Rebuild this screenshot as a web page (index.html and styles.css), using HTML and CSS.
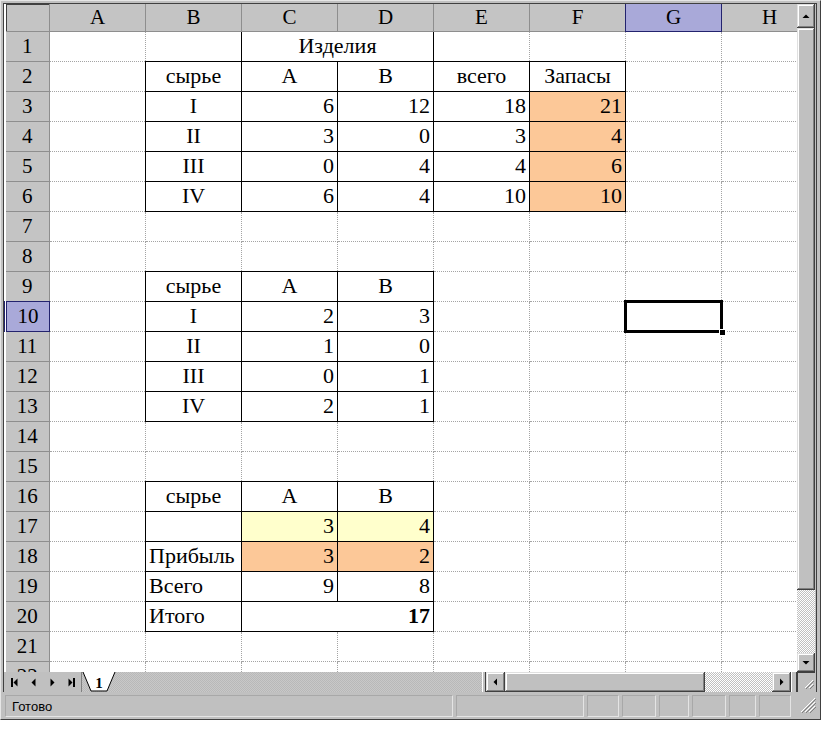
FILE: index.html
```html
<!DOCTYPE html>
<html>
<head>
<meta charset="utf-8">
<link rel="stylesheet" href="styles.css">
</head>
<body>
<div class="window">
  <div class="inner">
    <div class="main">
      <div class="grid-wrap">
        <table class="sheet">
          <colgroup>
            <col class="c-rh"><col class="c-col"><col class="c-col"><col class="c-col"><col class="c-col"><col class="c-col"><col class="c-col"><col class="c-col"><col class="c-col">
          </colgroup>
          <tr class="hdr"><th class="corner"></th><th>A</th><th>B</th><th>C</th><th>D</th><th>E</th><th>F</th><th class="hsel">G</th><th>H</th></tr>
          <tr><th class="rh">1</th><td></td><td></td><td colspan="2" class="b c">Изделия</td><td></td><td></td><td></td><td></td></tr>
          <tr><th class="rh">2</th><td></td><td class="b c">сырье</td><td class="b c">A</td><td class="b c">B</td><td class="b c">всего</td><td class="b c">Запасы</td><td></td><td></td></tr>
          <tr><th class="rh">3</th><td></td><td class="b c">I</td><td class="b r">6</td><td class="b r">12</td><td class="b r">18</td><td class="b r or">21</td><td></td><td></td></tr>
          <tr><th class="rh">4</th><td></td><td class="b c">II</td><td class="b r">3</td><td class="b r">0</td><td class="b r">3</td><td class="b r or">4</td><td></td><td></td></tr>
          <tr><th class="rh">5</th><td></td><td class="b c">III</td><td class="b r">0</td><td class="b r">4</td><td class="b r">4</td><td class="b r or">6</td><td></td><td></td></tr>
          <tr><th class="rh">6</th><td></td><td class="b c">IV</td><td class="b r">6</td><td class="b r">4</td><td class="b r">10</td><td class="b r or">10</td><td></td><td></td></tr>
          <tr><th class="rh">7</th><td></td><td></td><td></td><td></td><td></td><td></td><td></td><td></td></tr>
          <tr><th class="rh">8</th><td></td><td></td><td></td><td></td><td></td><td></td><td></td><td></td></tr>
          <tr><th class="rh">9</th><td></td><td class="b c">сырье</td><td class="b c">A</td><td class="b c">B</td><td></td><td></td><td></td><td></td></tr>
          <tr><th class="rh hsel">10</th><td></td><td class="b c">I</td><td class="b r">2</td><td class="b r">3</td><td></td><td></td><td class="active"><div class="selbox"></div><div class="handle"></div></td><td></td></tr>
          <tr><th class="rh">11</th><td></td><td class="b c">II</td><td class="b r">1</td><td class="b r">0</td><td></td><td></td><td></td><td></td></tr>
          <tr><th class="rh">12</th><td></td><td class="b c">III</td><td class="b r">0</td><td class="b r">1</td><td></td><td></td><td></td><td></td></tr>
          <tr><th class="rh">13</th><td></td><td class="b c">IV</td><td class="b r">2</td><td class="b r">1</td><td></td><td></td><td></td><td></td></tr>
          <tr><th class="rh">14</th><td></td><td></td><td></td><td></td><td></td><td></td><td></td><td></td></tr>
          <tr><th class="rh">15</th><td></td><td></td><td></td><td></td><td></td><td></td><td></td><td></td></tr>
          <tr><th class="rh">16</th><td></td><td class="b c">сырье</td><td class="b c">A</td><td class="b c">B</td><td></td><td></td><td></td><td></td></tr>
          <tr><th class="rh">17</th><td></td><td class="b"></td><td class="b r ye">3</td><td class="b r ye">4</td><td></td><td></td><td></td><td></td></tr>
          <tr><th class="rh">18</th><td></td><td class="b l">Прибыль</td><td class="b r or">3</td><td class="b r or">2</td><td></td><td></td><td></td><td></td></tr>
          <tr><th class="rh">19</th><td></td><td class="b l">Всего</td><td class="b r">9</td><td class="b r">8</td><td></td><td></td><td></td><td></td></tr>
          <tr><th class="rh">20</th><td></td><td class="b l">Итого</td><td colspan="2" class="b r bold">17</td><td></td><td></td><td></td><td></td></tr>
          <tr><th class="rh">21</th><td></td><td></td><td></td><td></td><td></td><td></td><td></td><td></td></tr>
          <tr><th class="rh">22</th><td></td><td></td><td></td><td></td><td></td><td></td><td></td><td></td></tr>
        </table>
      </div>
      <div class="vscroll">
        <div class="btn vup"><svg width="18" height="24" viewBox="0 0 18 24"><polygon points="5.5,14 12.5,14 9,10.5" fill="#000"/></svg></div>
        <div class="thumb vthumb"></div>
        <div class="track vtrack"></div>
        <div class="btn vdown"><svg width="18" height="19" viewBox="0 0 18 19"><polygon points="5.5,8 12.5,8 9,11.5" fill="#000"/></svg></div>
      </div>
    </div>
    <div class="tabbar">
      <div class="tabnav">
        <svg width="78" height="20" viewBox="0 0 78 20">
          <rect x="7" y="6" width="2" height="9" fill="#000"/>
          <polygon points="9.5,10.5 13.5,6.5 13.5,14.5" fill="#000"/>
          <polygon points="27.5,10.5 31.5,6.5 31.5,14.5" fill="#000"/>
          <polygon points="46.5,6.5 46.5,14.5 50.5,10.5" fill="#000"/>
          <polygon points="64.5,6.5 64.5,14.5 68.5,10.5" fill="#000"/>
          <rect x="69" y="6" width="2" height="9" fill="#000"/>
        </svg>
      </div>
      <div class="tabs">
        <svg class="tab" width="36" height="20" viewBox="0 0 36 20">
          <polygon points="1,0 33,0 25,19 9,19" fill="#fff"/>
          <polyline points="1,0 9,19 25,19 33,0" fill="none" stroke="#000" stroke-width="1"/>
          <text x="17" y="16" text-anchor="middle" class="tabtext">1</text>
        </svg>
      </div>
      <div class="hsplit"></div>
      <div class="hscroll">
        <div class="btn hleft"><svg width="19" height="20" viewBox="0 0 19 20"><polygon points="7.5,10 11,6.5 11,13.5" fill="#000"/></svg></div>
        <div class="thumb hthumb"></div>
        <div class="track htrack"></div>
        <div class="btn hright"><svg width="19" height="20" viewBox="0 0 19 20"><polygon points="8,6.5 8,13.5 11.5,10" fill="#000"/></svg></div>
      </div>
      <div class="hsep"></div>
      <div class="corner">
        <svg width="18" height="20" viewBox="0 0 18 20">
          <line x1="16" y1="8" x2="8" y2="16" stroke="#fff" stroke-width="1"/>
          <line x1="17" y1="9" x2="9" y2="17" stroke="#808080" stroke-width="1"/>
          <line x1="16" y1="12" x2="12" y2="16" stroke="#fff" stroke-width="1"/>
          <line x1="17" y1="13" x2="13" y2="17" stroke="#808080" stroke-width="1"/>
        </svg>
      </div>
    </div>
  </div>
  <div class="status">
    <div class="panel p-main">Готово</div>
    <div class="panel p1"></div>
    <div class="panel p2"></div>
    <div class="panel p3"></div>
    <div class="panel p4"></div>
    <div class="panel p5"></div>
    <div class="panel p6"></div>
    <div class="panel p7"></div>
    <div class="grip">
      <svg width="20" height="22" viewBox="0 0 20 22">
        <line x1="18" y1="6" x2="4" y2="20" stroke="#fff"/>
        <line x1="19" y1="7" x2="5" y2="21" stroke="#808080"/>
        <line x1="18" y1="10" x2="8" y2="20" stroke="#fff"/>
        <line x1="19" y1="11" x2="9" y2="21" stroke="#808080"/>
        <line x1="18" y1="14" x2="12" y2="20" stroke="#fff"/>
        <line x1="19" y1="15" x2="13" y2="21" stroke="#808080"/>
      </svg>
    </div>
  </div>
</div>
</body>
</html>
```
FILE: styles.css
```css
body {
  margin: 0;
  background: #ffffff;
}

.window {
  width: 821px;
  height: 720px;
  box-sizing: border-box;
  background: #c0c0c0;
  border: 1px solid;
  border-color: #e6e6e6 #404040 #404040 #e6e6e6;
  padding: 2px 3px 0 2px;
  display: flex;
  flex-direction: column;
}

.inner {
  border: 1px solid #404040;
  border-bottom: none;
  display: flex;
  flex-direction: column;
}

.main {
  display: flex;
  height: 668px;
}

.grid-wrap {
  width: 793px;
  height: 668px;
  overflow: hidden;
  background: #ffffff;
}

.sheet {
  border-collapse: collapse;
  table-layout: fixed;
  width: 812px;
  font-family: "Liberation Serif", "Times New Roman", serif;
  font-size: 22px;
  color: #000;
}

.c-rh { width: 44px; }
.c-col { width: 96px; }

.sheet tr { height: 30px; }
.sheet tr.hdr { height: 27px; }

.sheet th {
  background: #c4c4c4;
  border: 1px solid #8e8e8e;
  font-weight: normal;
  font-size: 21px;
  text-align: center;
  vertical-align: middle;
  padding: 0 0 1px 0;
  line-height: 24px;
}

.sheet th.corner,
.sheet th.rh {
  border-left: none;
}

.sheet tr.hdr th {
  border-top: none;
}

.sheet th.hsel {
  background: #a9a9d9;
  border-style: double;
  border-color: #23236e;
}

.sheet td {
  border: 1px dotted #a4a4a4;
  padding: 0 3px 3px 3px;
  line-height: 24px;
  vertical-align: bottom;
  white-space: nowrap;
  overflow: hidden;
}

.sheet td.b { border: 1px solid #000; }
.sheet td.c { text-align: center; }
.sheet td.r { text-align: right; }
.sheet td.l { text-align: left; }
.sheet td.or { background: #fcc898; }
.sheet td.ye { background: #ffffcc; }
.sheet td.bold { font-weight: bold; }

.sheet td.active {
  position: relative;
  overflow: visible;
}

.selbox {
  position: absolute;
  left: -2px;
  top: -2px;
  right: -2px;
  bottom: -2px;
  border: 3px solid #000;
}

.handle {
  position: absolute;
  right: -4px;
  bottom: -4px;
  width: 5px;
  height: 5px;
  background: #000;
  outline: 1px solid #fff;
}

/* scrollbars */
.btn {
  background: #c0c0c0;
  box-shadow: inset -1px -1px #404040, inset 1px 1px #e0e0e0, inset -2px -2px #808080, inset 2px 2px #ffffff;
}

.btn svg { display: block; }

.thumb {
  background: #c0c0c0;
  box-shadow: inset -1px -1px #404040, inset 1px 1px #e0e0e0, inset -2px -2px #808080, inset 2px 2px #ffffff;
}

.track {
  background: repeating-conic-gradient(#ffffff 0 25%, #c0c0c0 0 50%) 0 0 / 2px 2px;
}

.vscroll {
  width: 18px;
  display: flex;
  flex-direction: column;
}

.vup { height: 24px; }
.vthumb { height: 562px; }
.vtrack { height: 63px; }
.vdown { height: 19px; }

.tabbar {
  height: 20px;
  display: flex;
}

.tabnav {
  width: 77px;
  border-right: 1px solid #808080;
}

.tabnav svg { display: block; }

.tabs {
  width: 400px;
  background: repeating-conic-gradient(#c8c8c8 0 25%, #b8b8b8 0 50%) 0 0 / 2px 2px;
}

.tab { display: block; }

.tabtext {
  font-family: "Liberation Serif", "Times New Roman", serif;
  font-weight: bold;
  font-size: 15px;
  fill: #000;
}

.hsplit {
  width: 2px;
  border-left: 1px solid #ffffff;
  border-right: 1px solid #404040;
}

.hscroll {
  width: 305px;
  display: flex;
}

.hleft { width: 19px; }
.hthumb { width: 200px; }
.htrack { width: 67px; }
.hright { width: 19px; }

.hsep {
  width: 4px;
  border-left: 1px solid #ffffff;
  border-right: 1px solid #404040;
}

.corner {
  width: 18px;
  box-shadow: inset 1px 1px #404040;
}

.corner svg { display: block; }

/* status bar */
.status {
  flex: 1;
  display: flex;
  align-items: flex-start;
  padding: 3px 0 0 2px;
  gap: 3px;
  font-family: "Liberation Sans", Arial, sans-serif;
  font-size: 13px;
  color: #000;
}

.panel {
  height: 22px;
  box-sizing: border-box;
  border: 1px solid;
  border-color: #a8a8a8 #e4e4e4 #e4e4e4 #a8a8a8;
  line-height: 22px;
}

.p-main { width: 448px; padding-left: 6px; box-sizing: border-box; }
.p1 { width: 128px; }
.p2 { width: 32px; }
.p3 { width: 34px; }
.p4 { width: 30px; }
.p5 { width: 34px; }
.p6 { width: 27px; }
.p7 { width: 32px; }

.grip {
  margin-left: auto;
  margin-top: -3px;
}

.grip svg { display: block; }
```
